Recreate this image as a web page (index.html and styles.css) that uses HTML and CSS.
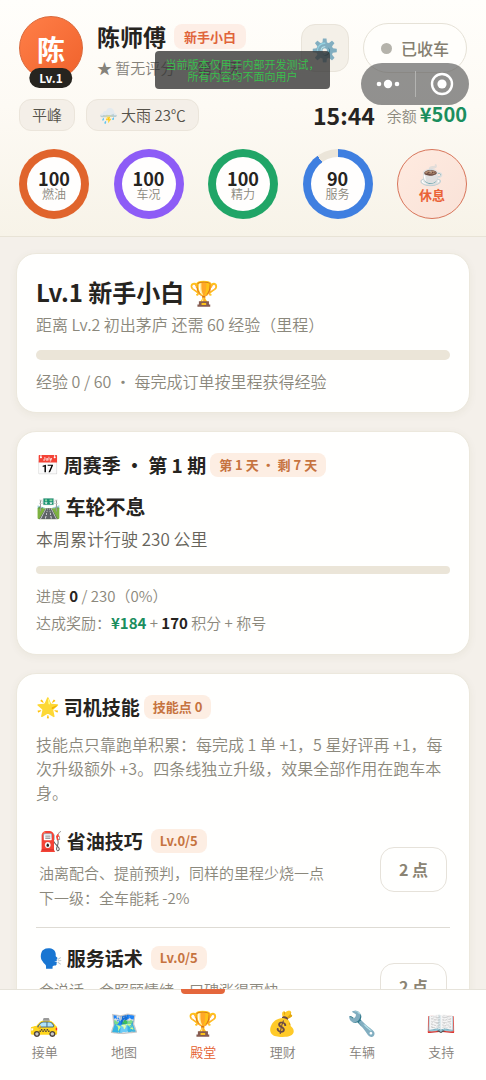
FILE: index.html
```html
<!DOCTYPE html>
<html lang="zh-CN">
<head>
  <meta charset="UTF-8">
  <meta name="viewport" content="width=device-width, initial-scale=1.0">
  <title>殿堂</title>
  <link rel="stylesheet" href="styles.css">
</head>
<body>
<header class="header">
  <div class="profile">
    <div class="avatar">陈<span class="avatar-level">Lv.1</span></div>
    <div class="profile-info">
      <div class="profile-name">陈师傅 <span class="tag">新手小白</span></div>
      <div class="profile-rating">★ 暂无评分 · 第 1 天</div>
    </div>
    <button class="settings-btn" aria-label="设置"><span class="emoji">⚙️</span></button>
    <button class="status-btn"><span class="status-dot"></span>已收车</button>
  </div>

  <div class="info-row">
    <span class="chip">平峰</span>
    <span class="chip"><span class="emoji">⛈️</span> 大雨 23℃</span>
    <span class="clock">15:44</span>
    <span class="balance">余额 <b>¥500</b></span>
  </div>

  <div class="gauges">
    <div class="gauge fuel"><div class="gauge-inner"><b>100</b><span>燃油</span></div></div>
    <div class="gauge car"><div class="gauge-inner"><b>100</b><span>车况</span></div></div>
    <div class="gauge energy"><div class="gauge-inner"><b>100</b><span>精力</span></div></div>
    <div class="gauge service"><div class="gauge-inner"><b>90</b><span>服务</span></div></div>
    <button class="rest-btn"><span class="emoji">☕</span>休息</button>
  </div>
</header>

<main class="content">
  <section class="card">
    <h1 class="level-title">Lv.1 新手小白 <span class="emoji">🏆</span></h1>
    <p class="note">距离 Lv.2 初出茅庐 还需 60 经验（里程）</p>
    <div class="bar bar-large"></div>
    <p class="note">经验 0 / 60 · 每完成订单按里程获得经验</p>
  </section>

  <section class="card">
    <h2 class="card-title"><span class="emoji">📅</span> 周赛季 · 第 1 期<span class="badge">第 1 天 · 剩 7 天</span></h2>
    <h3 class="quest-title"><span class="emoji">🛣️</span> 车轮不息</h3>
    <p class="quest-goal">本周累计行驶 230 公里</p>
    <div class="bar"></div>
    <p class="quest-line">进度 <b>0</b> / 230（0%）</p>
    <p class="quest-line">达成奖励：<b class="money">¥184</b> + <b>170</b> 积分 + 称号</p>
  </section>

  <section class="card">
    <h2 class="card-title"><span class="emoji">🌟</span> 司机技能<span class="badge">技能点 0</span></h2>
    <p class="skill-intro">技能点只靠跑单积累：每完成 1 单 +1，5 星好评再 +1，每次升级额外 +3。四条线独立升级，效果全部作用在跑车本身。</p>
    <div class="skill">
      <div class="skill-body">
        <h3 class="skill-title"><span class="emoji">⛽</span> 省油技巧<span class="badge">Lv.0/5</span></h3>
        <p class="skill-text">油离配合、提前预判，同样的里程少烧一点</p>
        <p class="skill-text">下一级：全车能耗 -2%</p>
      </div>
      <button class="cost-btn">2 点</button>
    </div>
    <div class="skill">
      <div class="skill-body">
        <h3 class="skill-title"><span class="emoji">🗣️</span> 服务话术<span class="badge">Lv.0/5</span></h3>
        <p class="skill-text">会说话、会照顾情绪，口碑涨得更快</p>
      </div>
      <button class="cost-btn">2 点</button>
    </div>
  </section>
</main>

<nav class="tabbar">
  <a href="#" class="tab"><span class="emoji">🚕</span>接单</a>
  <a href="#" class="tab"><span class="emoji">🗺️</span>地图</a>
  <a href="#" class="tab active"><span class="emoji">🏆</span>殿堂</a>
  <a href="#" class="tab"><span class="emoji">💰</span>理财</a>
  <a href="#" class="tab"><span class="emoji">🔧</span>车辆</a>
  <a href="#" class="tab"><span class="emoji">📖</span>支持</a>
</nav>

<!-- host app overlays -->
<div class="dev-notice">当前版本仅用于内部开发测试，<br>所有内容均不面向用户</div>
<div class="capsule">
  <button aria-label="更多">
    <svg width="24" height="10" viewBox="0 0 24 10" fill="#fff"><circle cx="3" cy="5" r="2.3"/><circle cx="12" cy="5" r="4.2"/><circle cx="21" cy="5" r="2.3"/></svg>
  </button>
  <button aria-label="关闭">
    <svg width="24" height="24" viewBox="0 0 24 24"><circle cx="12" cy="12" r="10" fill="none" stroke="#fff" stroke-width="2.4"/><circle cx="12" cy="12" r="4.6" fill="#fff"/></svg>
  </button>
</div>
</body>
</html>
```
FILE: styles.css
```css
* {
  box-sizing: border-box;
}

body {
  margin: 0;
  height: 100vh;
  display: flex;
  flex-direction: column;
  overflow: hidden;
  position: relative;
  background: #f4f0ea;
  color: #26241f;
  font-family: "Noto Sans CJK SC", "Noto Sans", sans-serif;
  font-size: 15px;
  font-weight: 350;
}

h1, h2, h3, p {
  margin: 0;
}

b {
  font-weight: 700;
}

button {
  font-family: inherit;
  padding: 0;
  cursor: pointer;
}

.emoji {
  font-family: "Noto Color Emoji", "Noto Sans CJK SC", sans-serif;
  font-weight: 400;
  line-height: 1;
}

/* header */
.header {
  padding: 16px 19px 17px;
  background: linear-gradient(180deg, #fffefb 0%, #fdfaf4 45%, #f7f3e8 100%);
  border-bottom: 1px solid #e8e3d6;
}

.profile {
  display: flex;
  align-items: center;
  height: 64px;
}

.avatar {
  position: relative;
  width: 64px;
  height: 64px;
  border-radius: 50%;
  background: linear-gradient(135deg, #ff7f48, #f0622c);
  border: 1px solid #d9693c;
  color: #fff;
  font-size: 28px;
  font-weight: 700;
  line-height: 64px;
  text-align: center;
}

.avatar-level {
  position: absolute;
  left: 50%;
  bottom: -9px;
  transform: translateX(-50%);
  padding: 0 10px;
  border-radius: 10px;
  background: #26241f;
  font-size: 12px;
  line-height: 20px;
}

.profile-info {
  flex: 1;
  min-width: 0;
  margin-left: 14px;
  padding-top: 6px;
  white-space: nowrap;
}

.profile-name {
  display: flex;
  align-items: center;
  gap: 8px;
  font-size: 23px;
  font-weight: 700;
  line-height: 34px;
}

.tag {
  padding: 0 10px;
  border-radius: 8px;
  background: #fdeee6;
  color: #e0643a;
  font-size: 13px;
  line-height: 25px;
}

.profile-rating {
  color: #85827a;
  line-height: 30px;
}

.settings-btn {
  width: 48px;
  height: 48px;
  margin-right: 14px;
  border: 1px solid #e9e4da;
  border-radius: 14px;
  background: #f4f0e8;
  font-size: 22px;
}

.status-btn {
  display: flex;
  align-items: center;
  gap: 9px;
  height: 50px;
  padding: 0 17px;
  border: 1px solid #e6e2d7;
  border-radius: 25px;
  background: #fffefb;
  color: #857f70;
  font-size: 16px;
  font-weight: 500;
}

.status-dot {
  width: 11px;
  height: 11px;
  border-radius: 50%;
  background: #b5b3ab;
}

.info-row {
  display: flex;
  align-items: center;
  height: 32px;
  margin-top: 19px;
}

.chip {
  margin-right: 11px;
  padding: 0 12px;
  border: 1px solid #ebe5db;
  border-radius: 12px;
  background: #f4efe8;
  color: #55524a;
  font-size: 15px;
  line-height: 30px;
}

.clock {
  margin-left: auto;
  font-size: 23px;
  font-weight: 700;
  line-height: 32px;
}

.balance {
  display: flex;
  align-items: baseline;
  gap: 3px;
  margin-left: 12px;
  color: #8b887c;
  font-size: 15px;
  line-height: 32px;
}

.balance b {
  color: #1b8e5e;
  font-size: 20px;
}

.gauges {
  display: flex;
  justify-content: space-between;
  margin-top: 18px;
}

.gauge {
  width: 70px;
  height: 70px;
  padding: 8px;
  border-radius: 50%;
}

.gauge-inner {
  display: flex;
  flex-direction: column;
  align-items: center;
  height: 54px;
  padding-top: 12px;
  border-radius: 50%;
  background: #fffefd;
}

.gauge b {
  font-size: 18px;
  line-height: 18px;
}

.gauge span {
  color: #8b887c;
  font-size: 12px;
  line-height: 14px;
}

.fuel { background: #e0642c; }
.car { background: #8d5cf6; }
.energy { background: #20a567; }
.service { background: conic-gradient(#3f7fe0 90%, #ebe5d9 0); }

.rest-btn {
  display: flex;
  flex-direction: column;
  align-items: center;
  justify-content: center;
  width: 70px;
  height: 70px;
  border: 1px solid #d8755a;
  border-radius: 50%;
  background: linear-gradient(135deg, #ffebe0, #f9e2d8);
  color: #ea6338;
  font-size: 13px;
  font-weight: 700;
  line-height: 18px;
}

.rest-btn .emoji {
  font-size: 20px;
  line-height: 22px;
}

/* content */
.content {
  flex: 1;
  min-height: 0;
  display: flex;
  flex-direction: column;
  gap: 18px;
  padding: 16px 16px 0;
  overflow-y: auto;
  scrollbar-width: none;
}

.card {
  flex-shrink: 0;
  padding: 18px 19px;
  border: 1px solid #ece8dd;
  border-radius: 20px;
  background: #fffffe;
  box-shadow: 0 2px 8px rgba(90, 80, 40, 0.06);
}

.level-title {
  font-size: 24px;
  line-height: 39px;
}

.note {
  color: #8b887c;
  font-size: 16px;
  line-height: 26px;
}

.bar {
  height: 8px;
  margin: 13px 0 8px;
  border-radius: 5px;
  background: #ebe5d8;
}

.bar-large {
  height: 10px;
}

.card-title {
  display: flex;
  align-items: center;
  gap: 4px;
  font-size: 19px;
  line-height: 30px;
}

.badge {
  padding: 0 9px;
  border-radius: 8px;
  background: #fdeee3;
  color: #c6733f;
  font-size: 13px;
  font-weight: 700;
  line-height: 24px;
}

.quest-title {
  margin-top: 13px;
  font-size: 20px;
  line-height: 28px;
}

.quest-goal {
  margin-top: 4px;
  color: #66635a;
  font-size: 17px;
  line-height: 28px;
}

.quest-line {
  color: #8b887c;
  line-height: 27px;
}

.quest-line b {
  color: #26241f;
}

.quest-line .money {
  color: #1b8e5e;
}

.skill-intro {
  margin: 10px 0 7px;
  color: #8b887c;
  font-size: 16px;
  line-height: 24px;
}

.skill {
  display: flex;
  align-items: center;
  min-height: 116px;
  padding: 0 3px;
}

.skill + .skill {
  border-top: 1px solid #dedbd4;
}

.skill-body {
  flex: 1;
  align-self: flex-start;
  padding-top: 15px;
}

.skill-title {
  display: flex;
  align-items: center;
  gap: 4px;
  margin-bottom: 4px;
  font-size: 19px;
  line-height: 30px;
}

.skill-title .badge {
  margin-left: 4px;
}

.skill-text {
  color: #8b887c;
  line-height: 25px;
}

.cost-btn {
  width: 67px;
  height: 45px;
  border: 1px solid #e6e2da;
  border-radius: 14px;
  background: #fffffe;
  color: #8b8474;
  font-size: 16px;
  font-weight: 700;
}

/* bottom tabs */
.tabbar {
  display: flex;
  flex-shrink: 0;
  height: 91px;
  padding: 0 5px;
  border-top: 1px solid #e6e3da;
  background: #fffffe;
}

.tab {
  flex: 1;
  display: flex;
  flex-direction: column;
  align-items: center;
  padding-top: 17px;
  color: #85817a;
  font-size: 13px;
  line-height: 20px;
  text-decoration: none;
  position: relative;
}

.tab .emoji {
  margin-bottom: 1px;
  font-size: 24px;
  line-height: 34px;
}

.tab.active {
  color: #e4602f;
}

.tab.active::before {
  content: "";
  position: absolute;
  top: -1px;
  width: 44px;
  height: 5px;
  border-radius: 0 0 4px 4px;
  background: #e4673c;
}

/* overlays */
.dev-notice {
  position: absolute;
  top: 51px;
  left: 155px;
  width: 175px;
  padding: 7px 0;
  border-radius: 4px;
  background: rgba(50, 50, 50, 0.78);
  color: #38c24c;
  font-size: 11px;
  line-height: 12px;
  text-align: center;
  white-space: nowrap;
}

.capsule {
  position: absolute;
  top: 63px;
  right: 17px;
  display: flex;
  align-items: center;
  width: 108px;
  height: 42px;
  border-radius: 21px;
  background: rgba(90, 90, 90, 0.66);
}

.capsule button {
  flex: 1;
  display: flex;
  align-items: center;
  justify-content: center;
  height: 26px;
  border: none;
  background: none;
}

.capsule button + button {
  border-left: 1px solid #b3b3b1;
}
```
